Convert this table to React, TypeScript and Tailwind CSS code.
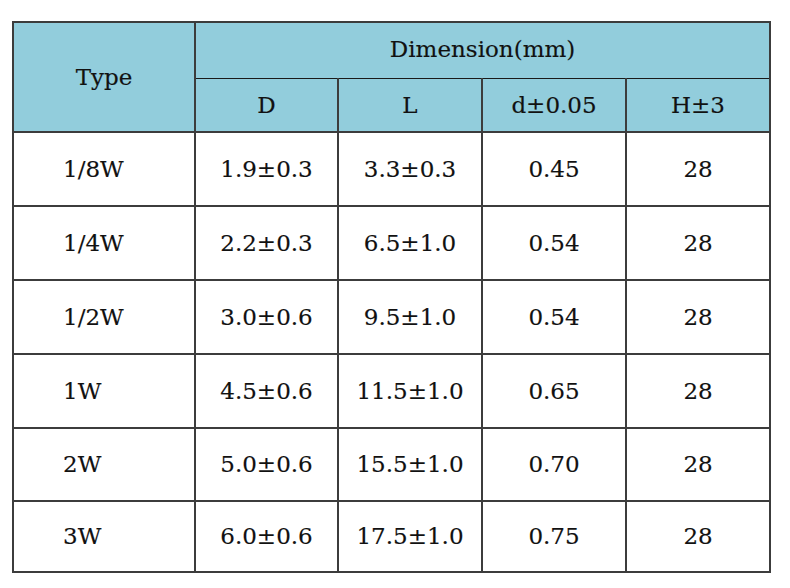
const ROWS = [
  ["1/8W", "1.9±0.3", "3.3±0.3", "0.45", "28"],
  ["1/4W", "2.2±0.3", "6.5±1.0", "0.54", "28"],
  ["1/2W", "3.0±0.6", "9.5±1.0", "0.54", "28"],
  ["1W", "4.5±0.6", "11.5±1.0", "0.65", "28"],
  ["2W", "5.0±0.6", "15.5±1.0", "0.70", "28"],
  ["3W", "6.0±0.6", "17.5±1.0", "0.75", "28"],
]

const HEIGHTS = ["h-[74px]", "h-[74px]", "h-[74px]", "h-[74px]", "h-[73px]", "h-[71px]"]

export default function App() {
  return (
    <div className="w-[790px] h-[588px] bg-white pl-[12px] pt-[21px] font-['DejaVu_Serif',serif] text-[23px] text-[#111] [-webkit-text-stroke:0.15px_#111]">
      <table className="w-[757px] table-fixed border-collapse border-2 border-[#3c3c3c]">
        <colgroup>
          <col className="w-[182px]" />
          <col className="w-[143px]" />
          <col className="w-[144px]" />
          <col className="w-[144px]" />
          <col className="w-[144px]" />
        </colgroup>
        <thead className="bg-[#92cddc]">
          <tr className="h-[56px]">
            <th rowSpan={2} className="border-2 border-[#3c3c3c] font-normal text-center">
              Type
            </th>
            <th colSpan={4} className="border-2 border-[#3c3c3c] border-b-[1.5px] border-b-[#1a1a1a] font-normal text-center pb-[2px]">
              Dimension(mm)
            </th>
          </tr>
          <tr className="h-[54px]">
            <th className="border-2 border-[#3c3c3c] border-t-[1.5px] border-t-[#1a1a1a] font-normal text-center">D</th>
            <th className="border-2 border-[#3c3c3c] border-t-[1.5px] border-t-[#1a1a1a] font-normal text-center">L</th>
            <th className="border-2 border-[#3c3c3c] border-t-[1.5px] border-t-[#1a1a1a] font-normal text-center">d±0.05</th>
            <th className="border-2 border-[#3c3c3c] border-t-[1.5px] border-t-[#1a1a1a] font-normal text-center">H±3</th>
          </tr>
        </thead>
        <tbody>
          {ROWS.map((row, i) => (
            <tr key={row[0]} className={HEIGHTS[i]}>
              <td className="border-2 border-[#3c3c3c] pl-[49px] text-left">{row[0]}</td>
              {row.slice(1).map((cell, j) => (
                <td key={j} className="border-2 border-[#3c3c3c] text-center">
                  {cell}
                </td>
              ))}
            </tr>
          ))}
        </tbody>
      </table>
    </div>
  )
}
